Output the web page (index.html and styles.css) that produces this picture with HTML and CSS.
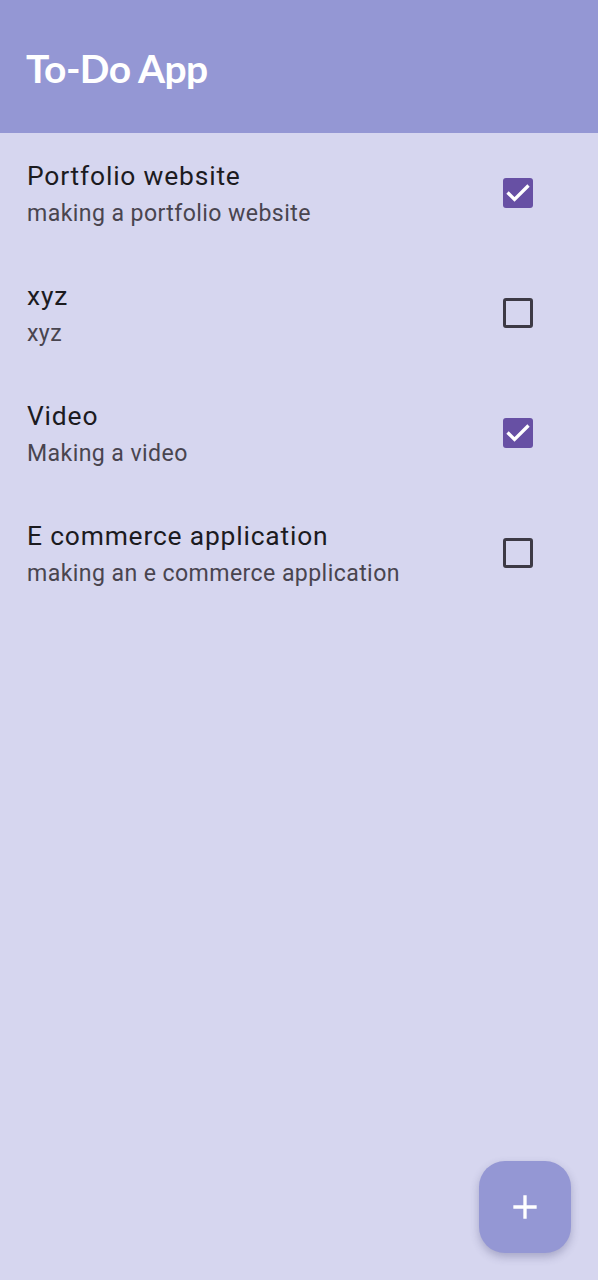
FILE: index.html
```html
<!DOCTYPE html>
<html>
<head>
<meta charset="utf-8">
<link rel="stylesheet" href="styles.css">
</head>
<body>
<header class="appbar"><h1 class="title">To-Do App</h1></header>
<main class="list">
  <div class="item">
    <div class="text"><div class="name">Portfolio website</div><div class="desc">making a portfolio website</div></div>
    <div class="box checked"><svg viewBox="0 0 30 30" width="30" height="30"><path d="M4.5 14.5l7 7 14-14" fill="none" stroke="#fff" stroke-width="3.3"/></svg></div>
  </div>
  <div class="item">
    <div class="text"><div class="name">xyz</div><div class="desc">xyz</div></div>
    <div class="box"></div>
  </div>
  <div class="item">
    <div class="text"><div class="name">Video</div><div class="desc">Making a video</div></div>
    <div class="box checked"><svg viewBox="0 0 30 30" width="30" height="30"><path d="M4.5 14.5l7 7 14-14" fill="none" stroke="#fff" stroke-width="3.3"/></svg></div>
  </div>
  <div class="item">
    <div class="text"><div class="name">E commerce application</div><div class="desc">making an e commerce application</div></div>
    <div class="box"></div>
  </div>
</main>
<button class="fab"><svg viewBox="0 0 24 24" width="40" height="40"><path d="M19 13h-6v6h-2v-6H5v-2h6V5h2v6h6v2z" fill="#fff"/></svg></button>
</body>
</html>
```

FILE: styles.css
```css
html, body {
  margin: 0;
  padding: 0;
  height: 100%;
}
body {
  background: #d6d6ef;
  font-family: Roboto, "Noto Sans", sans-serif;
  position: relative;
  overflow: hidden;
}
.appbar {
  background: #9497d4;
  height: 133px;
  display: flex;
  align-items: center;
  padding-left: 26px;
  box-sizing: border-box;
}
.title {
  margin: 0;
  color: #fff;
  font-family: Lato, "Open Sans", sans-serif;
  font-weight: 700;
  font-size: 39px;
  letter-spacing: -0.6px;
  padding-top: 2px;
}
.list {
  padding-top: 25px;
}
.item {
  display: flex;
  align-items: flex-start;
  height: 120px;
  padding: 0 65px 0 27px;
  box-sizing: border-box;
}
.text {
  flex: 1;
}
.name {
  font-size: 26.4px;
  line-height: 36px;
  color: #1c1b1f;
  letter-spacing: 0.82px;
}
.desc {
  font-size: 23.1px;
  line-height: 40px;
  color: #49454f;
  letter-spacing: 0.41px;
}
.box {
  width: 30px;
  height: 30px;
  box-sizing: border-box;
  border: 3.3px solid #3d3a45;
  border-radius: 3px;
  margin-top: 20px;
  display: flex;
  align-items: center;
  justify-content: center;
}
.box.checked {
  background: #6750a4;
  border: none;
}
.fab {
  position: absolute;
  left: 479px;
  top: 1161px;
  width: 92px;
  height: 92px;
  border: none;
  border-radius: 26px;
  background: #9497d4;
  box-shadow: 0 4px 8px rgba(60, 60, 110, 0.3);
  display: flex;
  align-items: center;
  justify-content: center;
  padding: 0;
}
```
